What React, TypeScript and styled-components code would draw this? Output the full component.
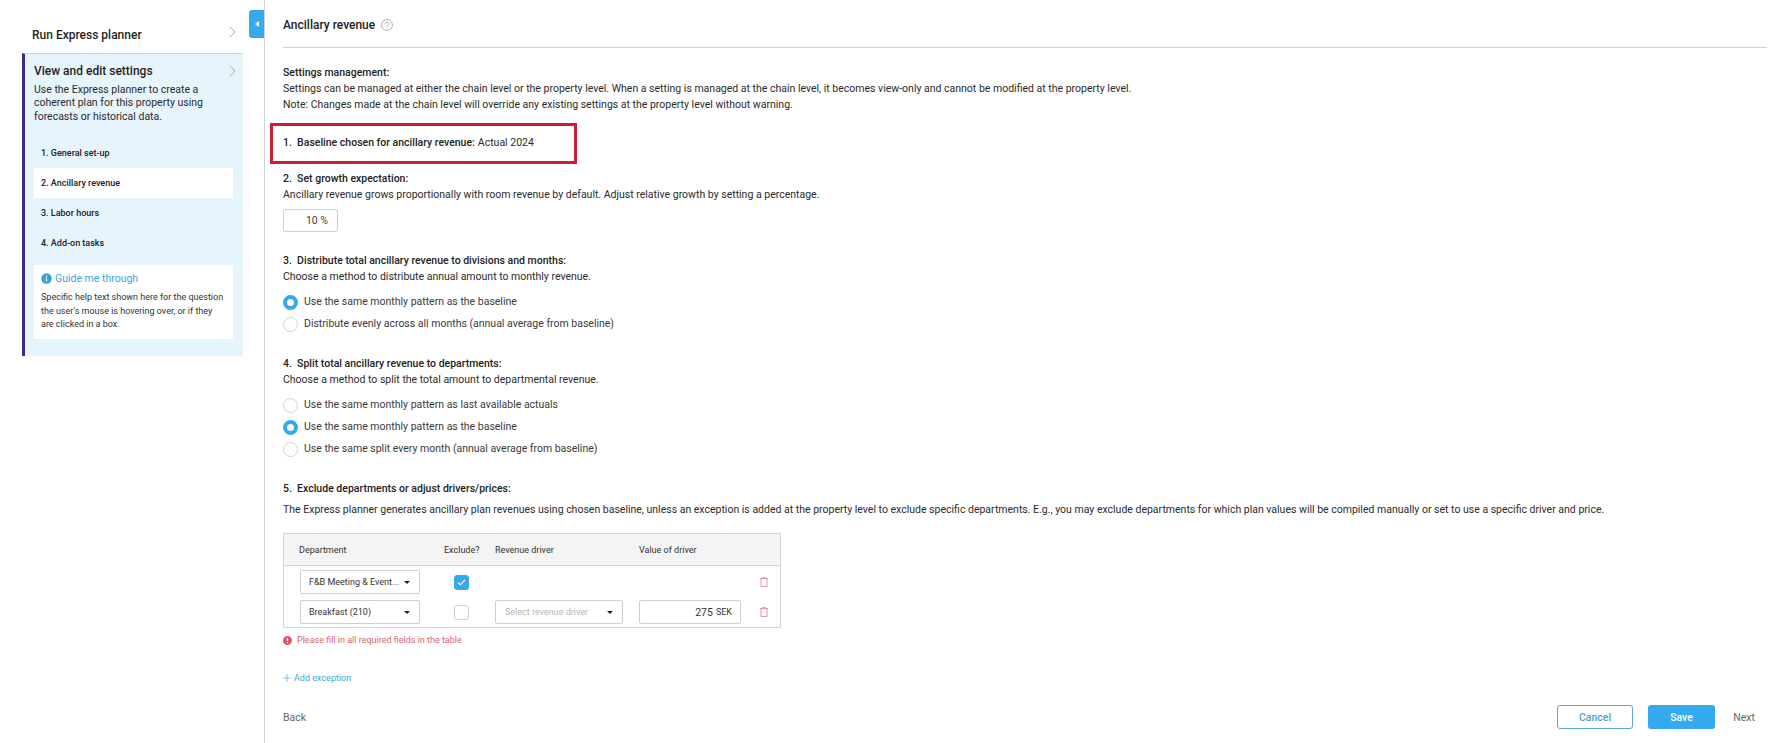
import React from "react";
import styled, { createGlobalStyle } from "styled-components";

const Global = createGlobalStyle`
  html, body { margin: 0; padding: 0; background: #fff; }
  body { font-family: Roboto, "Liberation Sans", sans-serif; color: #2b2b2b; font-size: 10.5px; }
  * { box-sizing: border-box; }
`;

const Page = styled.div`
  display: flex;
  width: 1785px;
  height: 743px;
  overflow: hidden;
`;

const Sidebar = styled.aside`
  position: relative;
  flex: 0 0 265px;
  height: 743px;
  border-right: 1px solid #cfd2d4;
  padding: 0 21px 0 22px;
`;

const Toggle = styled.div`
  position: absolute;
  top: 10px;
  right: 0;
  width: 15px;
  height: 28px;
  background: #35a9ee;
  border-radius: 3px 0 0 3px;
  display: flex;
  align-items: center;
  justify-content: center;
`;

const ToggleArrow = styled.span`
  width: 0;
  height: 0;
  border-top: 3.5px solid transparent;
  border-bottom: 3.5px solid transparent;
  border-right: 4px solid #fff;
`;

const TopRow = styled.div`
  height: 53px;
  padding: 26px 7px 0 10px;
  display: flex;
  justify-content: space-between;
  align-items: flex-start;
  font-size: 12px;
  font-weight: 500;
  color: #1f1f1f;
  line-height: 18px;
`;

const Panel = styled.section`
  height: 303px;
  background: #e6f4fc;
  border-top: 1px solid #c7d3da;
  border-left: 3px solid #3d2a8a;
  padding: 0 10px 0 9px;
`;

const PanelHead = styled.div`
  display: flex;
  justify-content: space-between;
  align-items: center;
  margin-right: -3px;
  padding-top: 9px;
  font-size: 12px;
  font-weight: 500;
  line-height: 16px;
  color: #1f1f1f;
`;

const PanelText = styled.p`
  margin: 3.5px 0 0;
  width: 190px;
  font-size: 10.5px;
  line-height: 13.5px;
  color: #2b2b2b;
`;

const Steps = styled.div`
  margin-top: 15px;
`;

const Step = styled.div<{ $active?: boolean }>`
  height: 30px;
  padding-left: 7px;
  display: flex;
  align-items: center;
  font-size: 9px;
  font-weight: 500;
  color: #222;
  background: ${(p) => (p.$active ? "#fff" : "transparent")};
`;

const Guide = styled.div`
  margin-top: 7px;
  height: 74px;
  background: #fff;
  padding: 6px 7px;
`;

const GuideTitle = styled.div`
  display: flex;
  align-items: center;
  gap: 3px;
  font-size: 10.5px;
  line-height: 15px;
  color: #3aa5dc;
`;

const GuideText = styled.p`
  margin: 5px 0 0;
  font-size: 9px;
  line-height: 13.5px;
  color: #333;
`;

const Main = styled.main`
  flex: 1;
  padding: 0 18px 0 18px;
  min-width: 0;
`;

const TitleBar = styled.div`
  height: 48px;
  padding-top: 16px;
  border-bottom: 1px solid #d4d4d4;
  display: flex;
  align-items: flex-start;
  gap: 6px;
  font-size: 12px;
  font-weight: 500;
  line-height: 18px;
  color: #222;
`;

const HelpIcon = styled.svg`
  margin-top: 3px;
`;

const Block = styled.div<{ $top: number }>`
  margin-top: ${(p) => p.$top}px;
  line-height: 16px;
`;

const Heading = styled.div`
  font-weight: 500;
  color: #222;
`;

const Para = styled.div<{ $top?: number }>`
  margin-top: ${(p) => p.$top ?? 0}px;
  color: #2b2b2b;
`;

const Marked = styled.div`
  margin: 10px 0 0 -13px;
  width: 307px;
  height: 41px;
  border: 3px solid #c8202f;
  padding: 0 0 3px 10px;
  display: flex;
  align-items: center;
  gap: 3px;
  white-space: pre;
`;

const PercentBox = styled.div`
  margin-top: 6px;
  width: 55px;
  height: 23px;
  border: 1px solid #cfcfcf;
  border-radius: 2px;
  display: flex;
  align-items: center;
  justify-content: flex-end;
  padding-right: 9px;
  color: #444;
`;

const Radios = styled.div`
  margin-top: 9px;
  display: flex;
  flex-direction: column;
  gap: 6px;
`;

const RadioRow = styled.div`
  display: flex;
  align-items: center;
  gap: 6px;
  height: 16px;
  color: #3a3a3a;
`;

const RadioDot = styled.span<{ $on?: boolean }>`
  width: 15px;
  height: 15px;
  border-radius: 50%;
  background: #fff;
  border: ${(p) => (p.$on ? "4px solid #35a9ee" : "1px solid #d2d2d2")};
`;

const Table = styled.div`
  margin-top: 15px;
  width: 498px;
  height: 95px;
  border: 1px solid #d6d6d6;
`;

const cols = "16px 120px 34px 41px 128px 16px 102px 19px 1fr";

const HeadRow = styled.div`
  height: 32px;
  background: #f4f4f4;
  border-bottom: 1px solid #d6d6d6;
  display: grid;
  grid-template-columns: ${cols};
  align-items: center;
  font-size: 9px;
  color: #333;
`;

const BodyRow = styled.div`
  height: 30px;
  display: grid;
  grid-template-columns: ${cols};
  align-items: center;
  color: #333;
  font-size: 9px;
`;

const Rows = styled.div`
  padding-top: 1px;
`;

const HeadCell = styled.div<{ $col: number; $shift?: number }>`
  grid-column: ${(p) => p.$col} / span 1;
  white-space: nowrap;
  margin-left: ${(p) => p.$shift ?? 0}px;
`;

const Select = styled.div<{ $col: number; $muted?: boolean }>`
  grid-column: ${(p) => p.$col};
  height: 24px;
  border: 1px solid #cfcfcf;
  border-radius: 2px;
  padding: 0 9px 0 ${(p) => (p.$muted ? 9 : 8)}px;
  display: flex;
  align-items: center;
  justify-content: space-between;
  color: ${(p) => (p.$muted ? "#b5b5b5" : "#333")};
  font-size: 9px;
  background: #fff;
  white-space: nowrap;
`;

const Caret = styled.span`
  width: 0;
  height: 0;
  border-left: 3px solid transparent;
  border-right: 3px solid transparent;
  border-top: 3px solid #222;
`;

const Check = styled.span<{ $on?: boolean }>`
  grid-column: 4;
  width: 15px;
  height: 15px;
  border-radius: 3px;
  background: ${(p) => (p.$on ? "#35a9ee" : "#fff")};
  border: 1px solid ${(p) => (p.$on ? "#35a9ee" : "#cfcfcf")};
  display: flex;
  align-items: center;
  justify-content: center;
`;

const ValueBox = styled.div`
  grid-column: 7;
  height: 24px;
  border: 1px solid #cfcfcf;
  border-radius: 2px;
  display: flex;
  align-items: center;
  justify-content: flex-end;
  gap: 3px;
  padding-right: 8px;
  font-size: 10.5px;
  color: #333;
`;

const Unit = styled.span`
  font-size: 9px;
`;

const Trash = styled.span`
  grid-column: 9;
  display: flex;
`;

const ErrorRow = styled.div`
  margin-top: 5px;
  display: flex;
  align-items: center;
  gap: 5px;
  height: 14px;
  font-size: 9px;
  color: #d9646f;
`;

const AddRow = styled.div`
  margin-top: 24px;
  display: flex;
  align-items: center;
  gap: 3px;
  height: 14px;
  font-size: 9px;
  color: #45a5cf;
`;

const Footer = styled.div`
  margin-top: 20px;
  height: 24px;
  display: flex;
  align-items: center;
  color: #666;
  font-size: 10.5px;
`;

const Spacer = styled.div`
  flex: 1;
`;

const Outline = styled.div`
  width: 76px;
  height: 24px;
  border: 1px solid #5aa9cf;
  border-radius: 3px;
  color: #4d9fd1;
  font-weight: 500;
  display: flex;
  align-items: center;
  justify-content: center;
`;

const Solid = styled.div`
  margin-left: 15px;
  width: 67px;
  height: 24px;
  border-radius: 3px;
  background: #35a9ee;
  color: #fff;
  font-weight: 500;
  display: flex;
  align-items: center;
  justify-content: center;
`;

const Next = styled.div`
  width: 52px;
  text-align: right;
  padding-right: 12px;
  color: #666;
`;

const Chevron = () => (
  <svg width="7" height="12" viewBox="0 0 7 12" fill="none" stroke="#a4a8ab" strokeWidth="1">
    <path d="M1 .8l5 5.2-5 5.2" />
  </svg>
);

const TrashIcon = () => (
  <svg width="8" height="10" viewBox="0 0 8 10" fill="none" stroke="#e28a98" strokeWidth="0.9">
    <path d="M0 1.6h8M2.7 1.6V.5h2.6v1.1M1 1.6v7.9h6V1.6" />
  </svg>
);

export default function App() {
  return (
    <Page>
      <Global />
      <Sidebar>
        <Toggle><ToggleArrow /></Toggle>
        <TopRow>Run Express planner <Chevron /></TopRow>
        <Panel>
          <PanelHead>View and edit settings <Chevron /></PanelHead>
          <PanelText>Use the Express planner to create a coherent plan for this property using forecasts or historical data.</PanelText>
          <Steps>
            <Step>1. General set-up</Step>
            <Step $active>2. Ancillary revenue</Step>
            <Step>3. Labor hours</Step>
            <Step>4. Add-on tasks</Step>
          </Steps>
          <Guide>
            <GuideTitle>
              <svg width="11" height="11" viewBox="0 0 11 11">
                <circle cx="5.5" cy="5.5" r="5.2" fill="#35a0dc" />
                <rect x="4.9" y="4.6" width="1.2" height="3.8" fill="#fff" />
                <rect x="4.9" y="2.6" width="1.2" height="1.2" fill="#fff" />
              </svg>
              Guide me through
            </GuideTitle>
            <GuideText>Specific help text shown here for the question the user's mouse is hovering over, or if they are clicked in a box.</GuideText>
          </Guide>
        </Panel>
      </Sidebar>
      <Main>
        <TitleBar>
          Ancillary revenue
          <HelpIcon width="12" height="12" viewBox="0 0 12 12" fill="none" stroke="#9a9a9a" strokeWidth="0.8">
            <circle cx="6" cy="6" r="5.4" />
            <path d="M4.4 4.7c0-2.1 3.3-2.1 3.3 0 0 1.2-1.7 1.2-1.7 2.6M6 8.2v1" />
          </HelpIcon>
        </TitleBar>
        <Block $top={17}>
          <Heading>Settings management:</Heading>
          <Para>Settings can be managed at either the chain level or the property level. When a setting is managed at the chain level, it becomes view-only and cannot be modified at the property level.</Para>
          <Para>Note: Changes made at the chain level will override any existing settings at the property level without warning.</Para>
        </Block>
        <Marked><Heading>1.&nbsp; Baseline chosen for ancillary revenue:</Heading><span>Actual 2024</span></Marked>
        <Block $top={7}>
          <Heading>2.&nbsp; Set growth expectation:</Heading>
          <Para>Ancillary revenue grows proportionally with room revenue by default. Adjust relative growth by setting a percentage.</Para>
          <PercentBox>10 %</PercentBox>
        </Block>
        <Block $top={21}>
          <Heading>3.&nbsp; Distribute total ancillary revenue to divisions and months:</Heading>
          <Para>Choose a method to distribute annual amount to monthly revenue.</Para>
          <Radios>
            <RadioRow><RadioDot $on />Use the same monthly pattern as the baseline</RadioRow>
            <RadioRow><RadioDot />Distribute evenly across all months (annual average from baseline)</RadioRow>
          </Radios>
        </Block>
        <Block $top={24}>
          <Heading>4.&nbsp; Split total ancillary revenue to departments:</Heading>
          <Para>Choose a method to split the total amount to departmental revenue.</Para>
          <Radios>
            <RadioRow><RadioDot />Use the same monthly pattern as last available actuals</RadioRow>
            <RadioRow><RadioDot $on />Use the same monthly pattern as the baseline</RadioRow>
            <RadioRow><RadioDot />Use the same split every month (annual average from baseline)</RadioRow>
          </Radios>
        </Block>
        <Block $top={24}>
          <Heading>5.&nbsp; Exclude departments or adjust drivers/prices:</Heading>
          <Para $top={5}>The Express planner generates ancillary plan revenues using chosen baseline, unless an exception is added at the property level to exclude specific departments. E.g., you may exclude departments for which plan values will be compiled manually or set to use a specific driver and price.</Para>
        </Block>
        <Table>
          <HeadRow>
            <HeadCell $col={2} $shift={-1}>Department</HeadCell>
            <HeadCell $col={4} $shift={-10}>Exclude?</HeadCell>
            <HeadCell $col={5}>Revenue driver</HeadCell>
            <HeadCell $col={7}>Value of driver</HeadCell>
          </HeadRow>
          <Rows>
            <BodyRow>
              <Select $col={2}>F&amp;B Meeting &amp; Event... <Caret /></Select>
              <Check $on>
                <svg width="9" height="7" viewBox="0 0 9 7" fill="none" stroke="#fff" strokeWidth="1.1"><path d="M1 3.5l2.3 2.3L8 1" /></svg>
              </Check>
              <Trash><TrashIcon /></Trash>
            </BodyRow>
            <BodyRow>
              <Select $col={2}>Breakfast (210) <Caret /></Select>
              <Check />
              <Select $col={5} $muted>Select revenue driver <Caret /></Select>
              <ValueBox>275 <Unit>SEK</Unit></ValueBox>
              <Trash><TrashIcon /></Trash>
            </BodyRow>
          </Rows>
        </Table>
        <ErrorRow>
          <svg width="9" height="9" viewBox="0 0 9 9">
            <circle cx="4.5" cy="4.5" r="4.5" fill="#de5a68" />
            <rect x="4" y="2" width="1" height="3" fill="#fff" />
            <rect x="4" y="6" width="1" height="1" fill="#fff" />
          </svg>
          Please fill in all required fields in the table
        </ErrorRow>
        <AddRow>
          <svg width="8" height="8" viewBox="0 0 8 8" stroke="#6bb4d4" strokeWidth="0.8"><path d="M4 0v8M0 4h8" /></svg>
          Add exception
        </AddRow>
        <Footer>
          Back
          <Spacer />
          <Outline>Cancel</Outline>
          <Solid>Save</Solid>
          <Next>Next</Next>
        </Footer>
      </Main>
    </Page>
  );
}
